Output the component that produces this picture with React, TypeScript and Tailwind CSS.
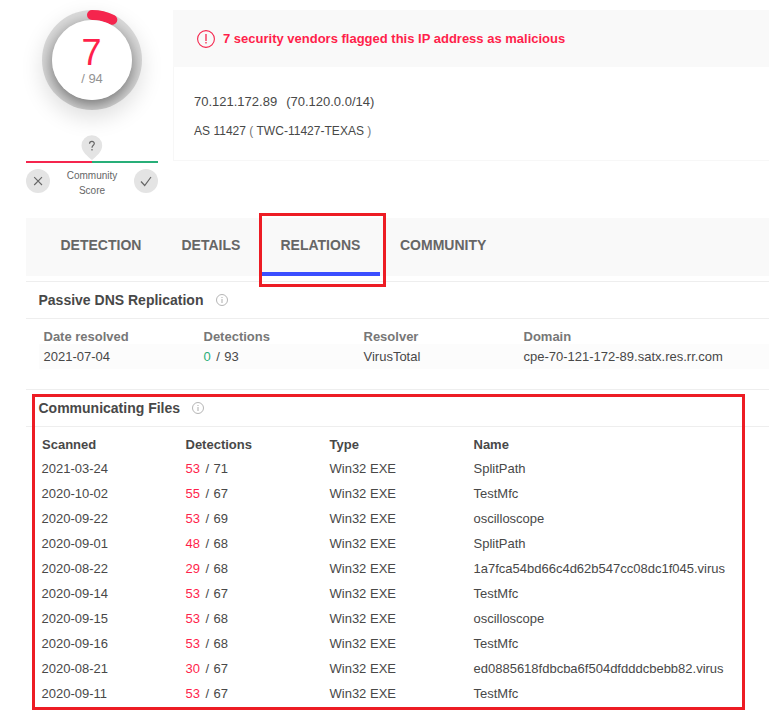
import React from "react";

const files = [
  ["2021-03-24", "53", "71", "SplitPath"],
  ["2020-10-02", "55", "67", "TestMfc"],
  ["2020-09-22", "53", "69", "oscilloscope"],
  ["2020-09-01", "48", "68", "SplitPath"],
  ["2020-08-22", "29", "68", "1a7fca54bd66c4d62b547cc08dc1f045.virus"],
  ["2020-09-14", "53", "67", "TestMfc"],
  ["2020-09-15", "53", "68", "oscilloscope"],
  ["2020-09-16", "53", "68", "TestMfc"],
  ["2020-08-21", "30", "67", "ed0885618fdbcba6f504dfdddcbebb82.virus"],
  ["2020-09-11", "53", "67", "TestMfc"],
];

function InfoIcon() {
  return (
    <svg width="12" height="12" viewBox="0 0 12 12" fill="none" stroke="#adadad">
      <circle cx="6" cy="6" r="5.5" strokeWidth="0.9" />
      <path d="M6 5v4M6 3v1" strokeWidth="1" />
    </svg>
  );
}

function Gauge() {
  return (
    <div className="relative mx-auto mt-[10px] h-[100px] w-[100px] rounded-full bg-[#dcdcdc] shadow-[0_8px_22px_rgba(0,0,0,0.13)]">
      <div className="absolute inset-0 overflow-hidden rounded-full">
        <div className="m-[10px] h-20 w-20 rounded-full shadow-[0_5px_17px_rgba(0,0,0,0.52)]" />
      </div>
      <svg className="absolute inset-0" width="100" height="100" fill="none">
        <path d="M50 5A45 45 0 0 1 70.3 9.8" stroke="#f5254d" strokeWidth="10" strokeLinecap="round" />
      </svg>
      <div className="absolute inset-[10px] flex flex-col items-center rounded-full bg-white">
        <span className="mt-[14px] mr-px text-[36px] leading-[38px] text-[#ff1f4b]">7</span>
        <span className="text-[13px] leading-[14px] text-[#939393]">/ 94</span>
      </div>
    </div>
  );
}

function Score() {
  return (
    <div className="w-[132px]">
      <Gauge />
      <div className="mt-[25px] flex h-[26px] justify-center">
        <svg width="22" height="26" viewBox="0 0 22 26">
          <path d="M11 25C7 21.5 .5 17 .5 10.5A10.3 10.3 0 0 1 21.2 10.5C21.2 17 15 21.5 11 25Z" fill="#e4e4e4" />
          <path d="M8.5 8.7c.1-3 4.8-3 4.8-.2 0 1.8-2.3 1.9-2.3 4.3M11 14v1.5" stroke="#666" strokeWidth="1.2" fill="none" />
        </svg>
      </div>
      <div className="flex h-[2px]">
        <div className="flex-1 bg-[#f5254d]" />
        <div className="flex-1 bg-[#28ae78]" />
      </div>
      <div className="mt-[6px] flex items-start justify-between">
        <svg width="24" height="24" fill="none" stroke="#666" strokeWidth="1.1">
          <circle cx="12" cy="12" r="12" fill="#e4e4e4" stroke="none" />
          <path d="M8.2 8.2l7.8 7.8M16 8.2l-7.8 7.8" />
        </svg>
        <div className="-mt-px text-center text-[10px] leading-[15px] text-[#666]">
          Community
          <br />
          Score
        </div>
        <svg width="24" height="24" fill="none" stroke="#666" strokeWidth="1.2">
          <circle cx="12" cy="12" r="12" fill="#e4e4e4" stroke="none" />
          <path d="M7 12.5l3.7 4L17 8" />
        </svg>
      </div>
    </div>
  );
}

function SectionTitle({ title, gap }: { title: string; gap: string }) {
  return (
    <div className="ml-[26px] flex h-[38px] items-center border-y border-[#eeeeee] pl-[12.5px]">
      <h2 className={"text-[14px] font-bold text-[#484848] " + gap}>{title}</h2>
      <InfoIcon />
    </div>
  );
}

function Detections({ hits, total, tone }: { hits: string; total: string; tone: string }) {
  return (
    <span className="flex gap-[5.5px]">
      <span className={tone}>{hits}</span>
      <span className="[word-spacing:0.7px]">/ {total}</span>
    </span>
  );
}

export default function App() {
  return (
    <div
      className="relative h-[719px] w-[769px] overflow-hidden bg-white text-[13px] text-[#484848]"
      style={{ fontFamily: '"Liberation Sans", Arial, sans-serif' }}
    >
      <div className="flex h-[218px] pl-[26px]">
        <Score />
        <div className="mt-[10px] ml-[15px] h-[151px] flex-1 border-b border-l border-[#f7f7f7]">
          <div className="-ml-px flex h-[57px] items-center bg-[#f9f9f9] pl-[24px]">
            <svg width="18" height="18" fill="none" stroke="#f5254d">
              <circle cx="9" cy="9" r="8.4" strokeWidth="1.1" />
              <path d="M9 4v7M9 12v1.5" strokeWidth="1.3" />
            </svg>
            <span className="ml-[8px] font-bold text-[#ff1f4b]">
              7 security vendors flagged this IP address as malicious
            </span>
          </div>
          <div className="mt-[25px] ml-[20px] leading-[20px] whitespace-pre">
            70.121.172.89<span className="ml-[9px]">(70.120.0.0/14)</span>
          </div>
          <div className="mt-[9px] ml-[20px] text-[12px] leading-[20px] tracking-[0.02px]">
            AS 11427 <span className="text-[#777]">(</span> TWC-11427-TEXAS <span className="text-[#777]">)</span>
          </div>
        </div>
      </div>

      <nav className="ml-[26px] flex h-[58px] bg-[#f9f9f9] text-[14px] font-bold text-[#666]">
        <span className="ml-[34px] w-[121px] pl-[0.5px] leading-[54px]">DETECTION</span>
        <span className="w-[81px] pl-[0.5px] leading-[54px]">DETAILS</span>
        <span className="w-[118px] border-b-4 border-[#3b4eff] pl-[18.5px] leading-[54px]">RELATIONS</span>
        <span className="ml-[20px] leading-[54px]">COMMUNITY</span>
      </nav>

      <div className="h-[5px]" />
      <SectionTitle title="Passive DNS Replication" gap="mr-[13px]" />
      <div className="mt-[8px] ml-[43.5px] grid grid-cols-[160px_160px_160px_1fr] leading-[20px] font-bold text-[#777]">
        <span>Date resolved</span>
        <span>Detections</span>
        <span>Resolver</span>
        <span>Domain</span>
      </div>
      <div className="-mt-[3px] ml-[39px] grid h-[25px] grid-cols-[160px_160px_160px_1fr] items-center bg-[#fcfcfc] pl-[4.5px]">
        <span>2021-07-04</span>
        <Detections hits="0" total="93" tone="text-[#28ae78]" />
        <span>VirusTotal</span>
        <span>cpe-70-121-172-89.satx.res.rr.com</span>
      </div>

      <div className="h-[20px]" />
      <SectionTitle title="Communicating Files" gap="mr-[12px]" />
      <div className="mt-[7px] ml-[42px] grid grid-cols-[143.5px_144px_144px_1fr] leading-[22px] font-bold">
        <span>Scanned</span>
        <span>Detections</span>
        <span>Type</span>
        <span>Name</span>
      </div>
      <div className="ml-[41.5px]">
        {files.map(([date, hits, total, name]) => (
          <div key={date} className="grid h-[25px] grid-cols-[144px_144px_144px_1fr] items-center">
            <span>{date}</span>
            <Detections hits={hits} total={total} tone="text-[#ff1f4b]" />
            <span>Win32 EXE</span>
            <span>{name}</span>
          </div>
        ))}
      </div>

      <div className="absolute top-[213px] left-[259px] h-[74px] w-[127px] border-3 border-[#ed1c24]" />
      <div className="absolute top-[394px] left-[32px] h-[316px] w-[713px] border-3 border-[#ed1c24]" />
    </div>
  );
}
